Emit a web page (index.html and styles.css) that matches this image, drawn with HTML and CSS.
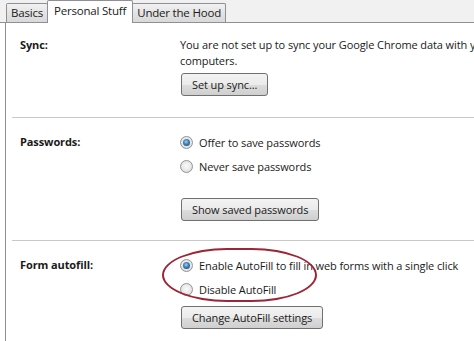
FILE: index.html
```html
<!DOCTYPE html>
<html lang="en">
<head>
    <meta charset="UTF-8">
    <meta name="viewport" content="width=device-width, initial-scale=1.0">
    <title>Options - Personal Stuff</title>
    <link rel="stylesheet" href="styles.css">
</head>
<body>
    <div class="window">
        <div class="tabs">
            <div class="tab">Basics</div>
            <div class="tab active">Personal Stuff</div>
            <div class="tab">Under the Hood</div>
        </div>
        <div class="panel">
            <section class="group group-sync">
                <div class="label">Sync:</div>
                <div class="content">
                    <p class="desc">You are not set up to sync your Google Chrome data with your other computers.</p>
                    <button class="btn">Set up sync...</button>
                </div>
            </section>

            <section class="group group-passwords">
                <div class="label">Passwords:</div>
                <div class="content">
                    <div class="options">
                        <label class="option"><span class="radio checked"></span>Offer to save passwords</label>
                        <label class="option"><span class="radio"></span>Never save passwords</label>
                    </div>
                    <button class="btn">Show saved passwords</button>
                </div>
            </section>

            <section class="group group-autofill">
                <div class="label">Form autofill:</div>
                <div class="content">
                    <div class="options">
                        <label class="option"><span class="radio checked"></span>Enable AutoFill to fill in web forms with a single click</label>
                        <label class="option"><span class="radio"></span>Disable AutoFill</label>
                        <div class="highlight"></div>
                    </div>
                    <button class="btn">Change AutoFill settings</button>
                </div>
            </section>
        </div>
    </div>
</body>
</html>
```

FILE: styles.css
```css
html, body {
    margin: 0;
    padding: 0;
    background: #fff;
    overflow: hidden;
}
body {
    font-family: "Open Sans", "Noto Sans", sans-serif;
    font-size: 11px;
    letter-spacing: -0.1px;
    color: #1a1a1a;
}
.window {
    width: 640px;
}

/* tab strip */
.tabs {
    display: flex;
    align-items: flex-end;
    height: 22px;
    padding-left: 6px;
    background: #f1f1f1;
    border-bottom: 1px solid #8e9096;
}
.tab {
    height: 18px;
    line-height: 18px;
    padding: 0 4px;
    font-size: 11.5px;
    letter-spacing: -0.2px;
    border: 1px solid #8e9096;
    border-bottom: none;
    margin-right: -1px;
    background: linear-gradient(#f2f2f2, #e3e3e3 50%, #d9d9d9);
    border-radius: 2px 2px 0 0;
}
.tab.active {
    height: 22px;
    line-height: 20px;
    margin-bottom: -1px;
    padding: 0 6px;
    background: #fff;
    position: relative;
    z-index: 1;
}

/* content panel */
.panel {
    margin-left: 5px;
    border-left: 1px solid #8e9096;
    background: #fff;
}
.group {
    display: grid;
    grid-template-columns: 160px 1fr;
    margin-left: 6px;
    padding-left: 8px;
    border-bottom: 1px solid #c9c9c9;
}
.group-sync {
    padding-top: 10px;
    padding-bottom: 21px;
}
.group-passwords {
    padding-top: 12px;
    padding-bottom: 19px;
}
.group-autofill {
    padding-top: 12px;
    padding-bottom: 20px;
    border-bottom: none;
}
.label {
    font-weight: bold;
    line-height: 24px;
}
.desc {
    margin: 4px 0 0;
    line-height: 16px;
    width: 370px;
}

.options {
    position: relative;
}
.option {
    display: flex;
    align-items: center;
    height: 24px;
    gap: 6px;
}
.radio {
    width: 13px;
    height: 13px;
    box-sizing: border-box;
    border-radius: 50%;
    border: 1px solid #939393;
    background: radial-gradient(circle at 50% 45%, #fbfbfb 0, #e8e8e8 55%, #cdcdcd 100%);
    position: relative;
    flex: none;
}
.radio.checked::after {
    content: '';
    position: absolute;
    left: 2px;
    top: 2px;
    width: 7px;
    height: 7px;
    border-radius: 50%;
    background: radial-gradient(circle at 45% 40%, #9fd0f2 0, #3b7fb5 45%, #163a58 100%);
}

.btn {
    display: block;
    height: 23px;
    margin-left: 1px;
    padding: 0 10px;
    font-family: inherit;
    font-size: 11px;
    letter-spacing: -0.1px;
    color: #1a1a1a;
    border: 1px solid #707070;
    border-radius: 3px;
    background: linear-gradient(#f3f3f3, #ebebeb 50%, #dddddd 51%, #cfcfcf);
}
.group-sync .btn {
    margin-top: 4px;
}
.group-passwords .btn {
    margin-top: 20px;
}
.group-autofill .btn {
    margin-top: 5px;
}

/* red hand-drawn style circle around the autofill choices */
.highlight {
    position: absolute;
    left: -18px;
    top: -5px;
    width: 151px;
    height: 50px;
    border: 2px solid #9b2637;
    border-radius: 42% / 50%;
    pointer-events: none;
}
```
